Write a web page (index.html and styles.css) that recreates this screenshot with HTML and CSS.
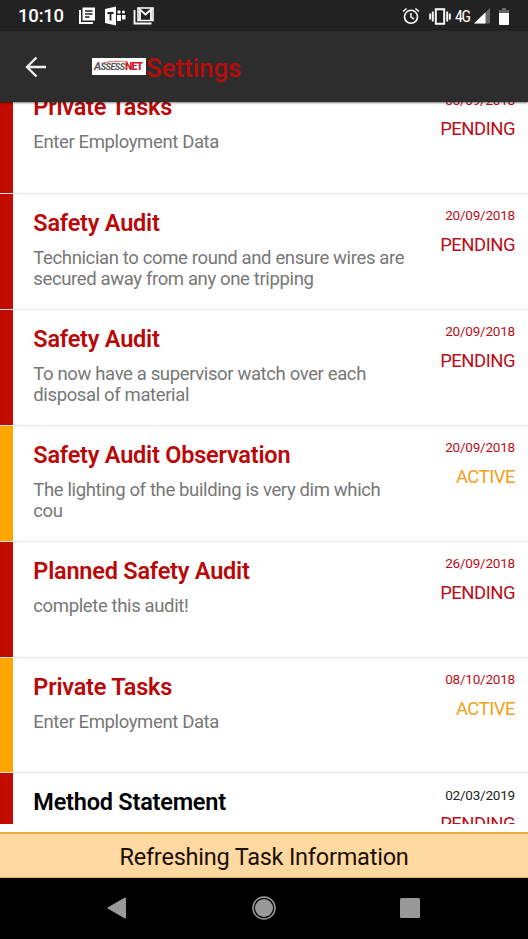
FILE: index.html
```
<!DOCTYPE html>
<html lang="en">
<head>
	<title>AssessNET Tasks</title>
	<meta charset="utf-8">
	<meta name="viewport" content="width=device-width, initial-scale=1.0">
	<link rel="stylesheet" href="styles.css">
</head>

<body>

	<!--Phone status bar-->
	<div class="statusbar">
		<span class="clock">10:10</span>
		<svg class="notifications" width="78" height="22" viewBox="0 0 78 22">
			<!--news-->
			<path d="M2 5v13h13" fill="none" stroke="#fff" stroke-width="2"/>
			<path d="M4.500 2.500H17v13H4.500z" fill="#fff"/>
			<path d="M7 6h7.500M7 9h7.500M7 12h4.500" stroke="#222" stroke-width="1.3"/>
			<!--teams-->
			<path d="M27 4l11-2.5v19L27 18z" fill="#fff"/>
			<path d="M29.5 8h6M32.5 8v7.5" stroke="#222" stroke-width="1.8"/>
			<circle cx="41" cy="7" r="1.7" fill="#fff"/>
			<circle cx="45.5" cy="7" r="1.5" fill="#fff"/>
			<path d="M39 10h4v6h-4zM44 10h3.5v4.5H44z" fill="#fff"/>
			<!--mail-->
			<path d="M56.500 5v13.500h17" fill="none" stroke="#fff" stroke-width="1.8"/>
			<path d="M60 3h15v12.500H60z" fill="none" stroke="#fff" stroke-width="1.6"/>
			<path d="M62 15V4.500l5.500 5 5.500-5V15" fill="none" stroke="#fff" stroke-width="1.8"/>
		</svg>
		<svg class="alarm" width="18" height="18" viewBox="0 0 18 18" fill="none" stroke="#fff">
			<circle cx="9" cy="9.800" r="6.500" stroke-width="1.600"/>
			<path d="M9 6v4.200l3 1.800M1 4.500l3.600-3M17 4.500l-3.600-3" stroke-width="1.500"/>
		</svg>
		<svg class="vibrate" width="22" height="17" viewBox="0 0 22 17" fill="none" stroke="#fff">
			<path d="M6.800 1.300h8.400v14.400H6.800z" stroke-width="1.900"/>
			<path d="M3.800 3.500v10M18.200 3.500v10" stroke-width="1.900"/>
			<path d="M1.200 5.500v6M20.800 5.500v6" stroke-width="1.900"/>
		</svg>
		<span class="network">4G</span>
		<svg class="signal" width="16" height="16" viewBox="0 0 16 16">
			<path d="M0 15.500L16 0v15.500z" fill="#666"/>
			<path d="M0 15.500L11.500 4.300v11.200z" fill="#fff"/>
		</svg>
		<svg class="battery" width="10" height="17" viewBox="0 0 10 17">
			<path d="M3 0h4v2h3v4H0V2h3z" fill="#666"/>
			<path d="M0 5h10v11a1 1 0 0 1-1 1H1a1 1 0 0 1-1-1z" fill="#fff"/>
		</svg>
	</div>

	<!--App header-->
	<div class="appbar">
		<svg class="back" width="22" height="22" viewBox="0 0 22 22">
			<path d="M11.500 1.500L2 11l9.500 9.500M2 11h19" fill="none" stroke="#eee" stroke-width="2.400"/>
		</svg>
		<div class="logo">
			<span class="assess"><span class="cap">A</span>SSESS</span><span class="net">NET</span>
			<svg class="swoosh" width="28" height="4" viewBox="0 0 28 4">
				<path d="M0 3.500Q10-.2 27 1.500Q12 .8 0 3.500z" fill="#c33" stroke="#c33" stroke-width=".3"/>
			</svg>
		</div>
		<div class="heading">Settings</div>
	</div>

	<!--Task list-->
	<div class="tasks">
		<div class="task pending">
			<div class="details">
				<div class="title">Private Tasks</div>
				<div class="info">Enter Employment Data</div>
			</div>
			<div class="side">
				<div class="date">06/09/2018</div>
				<div class="status">PENDING</div>
			</div>
		</div>
		<div class="task pending">
			<div class="details">
				<div class="title">Safety Audit</div>
				<div class="info">Technician to come round and ensure wires are<br>secured away from any one tripping</div>
			</div>
			<div class="side">
				<div class="date">20/09/2018</div>
				<div class="status">PENDING</div>
			</div>
		</div>
		<div class="task pending">
			<div class="details">
				<div class="title">Safety Audit</div>
				<div class="info">To now have a supervisor watch over each<br>disposal of material</div>
			</div>
			<div class="side">
				<div class="date">20/09/2018</div>
				<div class="status">PENDING</div>
			</div>
		</div>
		<div class="task active">
			<div class="details">
				<div class="title">Safety Audit Observation</div>
				<div class="info">The lighting of the building is very dim which<br>cou</div>
			</div>
			<div class="side">
				<div class="date">20/09/2018</div>
				<div class="status">ACTIVE</div>
			</div>
		</div>
		<div class="task pending">
			<div class="details">
				<div class="title">Planned Safety Audit</div>
				<div class="info">complete this audit!</div>
			</div>
			<div class="side">
				<div class="date">26/09/2018</div>
				<div class="status">PENDING</div>
			</div>
		</div>
		<div class="task active">
			<div class="details">
				<div class="title">Private Tasks</div>
				<div class="info">Enter Employment Data</div>
			</div>
			<div class="side">
				<div class="date">08/10/2018</div>
				<div class="status">ACTIVE</div>
			</div>
		</div>
		<div class="task pending upcoming">
			<div class="details">
				<div class="title">Method Statement</div>
			</div>
			<div class="side">
				<div class="date">02/03/2019</div>
				<div class="status">PENDING</div>
			</div>
		</div>
	</div>

	<div class="refresh">Refreshing Task Information</div>

	<!--Android navigation buttons-->
	<div class="navbar">
		<svg width="20" height="22" viewBox="0 0 20 22">
			<path d="M18 1.500v19L1.500 11z" fill="#999" stroke="#999" stroke-width="2" stroke-linejoin="round"/>
		</svg>
		<svg width="24" height="24" viewBox="0 0 24 24">
			<circle cx="12" cy="12" r="11" fill="none" stroke="#999" stroke-width="1.500"/>
			<circle cx="12" cy="12" r="9" fill="#999"/>
		</svg>
		<svg width="20" height="20" viewBox="0 0 20 20">
			<rect width="20" height="20" rx="1.500" fill="#999"/>
		</svg>
	</div>

</body>
</html>
```
FILE: styles.css
```
body
{
	margin: 0;
	width: 528px;
	height: 939px;
	display: flex;
	flex-direction: column;
	overflow: hidden;
	background: #fff;
	font-family: Roboto, "Liberation Sans", sans-serif;
	white-space: nowrap;
}

svg
{
	display: block;
	flex: none;
}

.statusbar
{
	box-sizing: border-box;
	height: 31px;
	flex: none;
	display: flex;
	align-items: center;
	padding: 1px 19px 0 18px;
	background: #222;
	color: #fff;
}

.clock
{
	width: 60px;
	font-size: 18.5px;
	font-weight: 500;
	letter-spacing: -0.2px;
}

.alarm {
	margin-left: auto;
}

.vibrate {
	margin-left: 9px;
}

.network
{
	width: 18px;
	margin: 0 1px 0 4px;
	font-size: 16px;
	font-stretch: condensed;
	letter-spacing: -1.5px;
}

.battery {
	margin-left: 9px;
}

.appbar
{
	box-sizing: border-box;
	height: 71px;
	flex: none;
	display: flex;
	align-items: center;
	padding-left: 25px;
	background: #2d2d2d;
	box-shadow: 0 1px 2px rgba(0,0,0,0.5);
	z-index: 1;
}

.logo
{
	position: relative;
	box-sizing: border-box;
	width: 54px;
	height: 17px;
	margin-left: 45px;
	padding: 3px 0 0 2px;
	background: #fff;
	display: flex;
	align-items: baseline;
	font-size: 10.5px;
	line-height: 12px;
	font-weight: bold;
}

.assess
{
	width: 31px;
	font-size: 9px;
	font-style: italic;
	color: #555;
	letter-spacing: -0.5px;
}

.cap {
	font-size: 11px;
}

.net
{
	font-weight: 900;
	color: #d01825;
	letter-spacing: -0.9px;
}

.swoosh
{
	position: absolute;
	left: 9px;
	top: 2px;
}

.heading
{
	padding-top: 3px;
	font-size: 26px;
	font-weight: 500;
	letter-spacing: -0.1px;
	color: #b90c0c;
}

.tasks
{
	height: 722px;
	flex: none;
	overflow: hidden;
	margin-bottom: 8px;
}

.task
{
	box-sizing: border-box;
	height: 115.92px;
	display: flex;
	justify-content: space-between;
	border-bottom: 1px solid #e6e6e6;
	padding-right: 13px;
}

/*The list is scrolled, so the first task starts under the header.*/
.task:first-child {
	margin-top: -24px;
}

.details
{
	padding: 15px 0 0 20.3px;
	border-left: 13px solid #c30c00;
}

.active .details {
	border-left-color: #ffa500;
}

.title
{
	font-size: 23.5px;
	line-height: 28px;
	font-weight: 600;
	letter-spacing: -0.22px;
	color: #b90808;
}

.info
{
	margin-top: 11px;
	font-size: 18.5px;
	line-height: 21px;
	letter-spacing: -0.37px;
	color: #777;
}

.side
{
	text-align: right;
	padding-top: 13.5px;
	color: #b90d18;
}

.date
{
	font-size: 13.5px;
	line-height: 16px;
	letter-spacing: -0.2px;
}

.status
{
	margin-top: 10.5px;
	font-size: 18.5px;
	line-height: 22px;
	letter-spacing: -0.5px;
}

.active .status {
	color: #f5a01a;
}

.upcoming .title {
	color: #000;
}

.upcoming .date {
	color: #222;
}

.refresh
{
	box-sizing: border-box;
	height: 46px;
	flex: none;
	border-top: 2px solid #f3aa3c;
	border-bottom: 1px solid #e0b060;
	background: #ffd9a0;
	color: #1a0f05;
	text-align: center;
	font-size: 23.5px;
	line-height: 46px;
	letter-spacing: -0.22px;
}

.navbar
{
	flex: 1;
	display: flex;
	align-items: center;
	justify-content: space-between;
	padding: 0 108px 2px 107px;
	background: #000;
}
```
